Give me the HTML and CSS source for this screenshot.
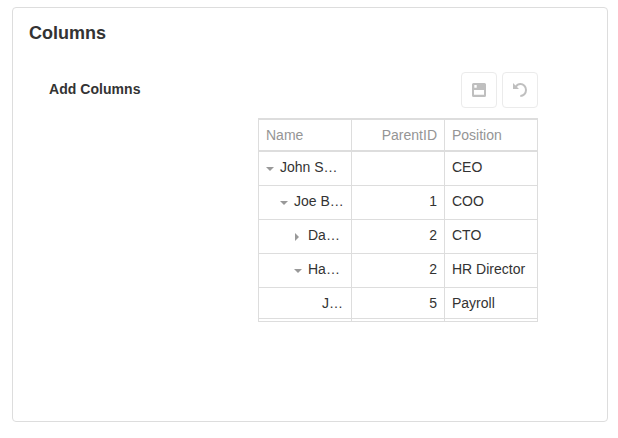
FILE: index.html
```html
<!DOCTYPE html>
<html lang="en">
<head>
<meta charset="utf-8">
<title>Columns</title>
<link rel="stylesheet" href="styles.css">
</head>
<body>
<section class="card">
  <h2 class="title">Columns</h2>
  <div class="toolbar">
    <span class="label">Add Columns</span>
    <div class="actions">
      <button class="btn" aria-label="Save"><svg width="14" height="14" viewBox="0 0 14 14"><path fill="#bfbfbf" fill-rule="evenodd" d="M1.500 0h11A1.500 1.500 0 0 1 14 1.500v11a1.500 1.500 0 0 1-1.500 1.500h-11A1.500 1.500 0 0 1 0 12.500v-11A1.500 1.500 0 0 1 1.500 0zM2.300 2v2.700h2.400V2zM2 7v4.800h10V7z"/></svg></button>
      <button class="btn" aria-label="Undo"><svg width="14" height="14" viewBox="0 0 14 14"><path fill="none" stroke="#bfbfbf" stroke-width="2" d="M2.800 3.800C4 2 5.500 1 7.300 1c3.200 0 5.700 2.700 5.700 6s-2.500 5.900-5.700 6"/><path fill="#bfbfbf" d="M0 0v6h6z"/></svg></button>
    </div>
  </div>
  <div class="grid">
    <div class="row head"><div class="cell">Name</div><div class="cell num">ParentID</div><div class="cell">Position</div></div>
    <div class="row"><div class="cell tree"><i class="arrow down"></i><span>John S…</span></div><div class="cell num"></div><div class="cell">CEO</div></div>
    <div class="row"><div class="cell tree level-1"><i class="arrow down"></i><span>Joe B…</span></div><div class="cell num">1</div><div class="cell">COO</div></div>
    <div class="row"><div class="cell tree level-2"><i class="arrow right"></i><span>Da…</span></div><div class="cell num">2</div><div class="cell">CTO</div></div>
    <div class="row"><div class="cell tree level-2"><i class="arrow down"></i><span>Ha…</span></div><div class="cell num">2</div><div class="cell">HR Director</div></div>
    <div class="row last"><div class="cell tree level-3"><i class="arrow"></i><span>J…</span></div><div class="cell num">5</div><div class="cell">Payroll</div></div>
    <div class="row filler"><div class="cell"></div><div class="cell"></div><div class="cell"></div></div>
  </div>
</section>
</body>
</html>
```

FILE: styles.css
```css
* { box-sizing: border-box; }
body {
  margin: 0;
  padding: 7px 10px 0 12px;
  background: #fff;
  color: #333;
  font: 14px/20px "Liberation Sans", Arial, sans-serif;
}
.card {
  width: 596px;
  height: 415px;
  padding: 14px 69px 0 16px;
  border: 1px solid #ddd;
  border-radius: 4px;
}
.title { margin: 0; font-size: 18px; line-height: 22px; }
.toolbar {
  display: flex;
  justify-content: space-between;
  margin-top: 28px;
  padding-left: 20px;
}
.label { padding-top: 7px; font-weight: bold; letter-spacing: .05px; }
.actions { display: flex; gap: 5px; }
.btn {
  display: flex;
  align-items: center;
  justify-content: center;
  width: 36px;
  height: 36px;
  padding: 0;
  border: 1px solid #ebebeb;
  border-radius: 4px;
  background: #fff;
}
.grid {
  width: 280px;
  margin: 10px 0 0 auto;
  border: 1px solid #ddd;
  border-top-width: 2px;
}
.row {
  display: grid;
  grid-template-columns: 93px 93px 92px;
  height: 34px;
  border-bottom: 1px solid #ddd;
}
.head { height: 32px; border-bottom-width: 2px; color: #959595; }
.last { height: 31px; }
.filler { height: 2px; border: 0; }
.cell {
  min-width: 0;
  padding: 5px 7px 0;
  border-right: 1px solid #ddd;
  white-space: nowrap;
}
.cell:last-child { border-right: 0; }
.filler .cell { padding: 0; }
.num { text-align: right; }
.tree { display: flex; }
.level-1 { padding-left: 21px; }
.level-2 { padding-left: 35px; }
.level-3 { padding-left: 49px; }
.arrow { flex: none; width: 14px; height: 20px; }
.arrow::before { content: ""; display: block; background: #999; }
.down::before { width: 8px; height: 4px; margin-top: 10px; clip-path: polygon(0 0, 100% 0, 50% 100%); }
.right::before { width: 4px; height: 8px; margin: 8px 0 0 1px; clip-path: polygon(0 0, 100% 50%, 0 100%); }
```
